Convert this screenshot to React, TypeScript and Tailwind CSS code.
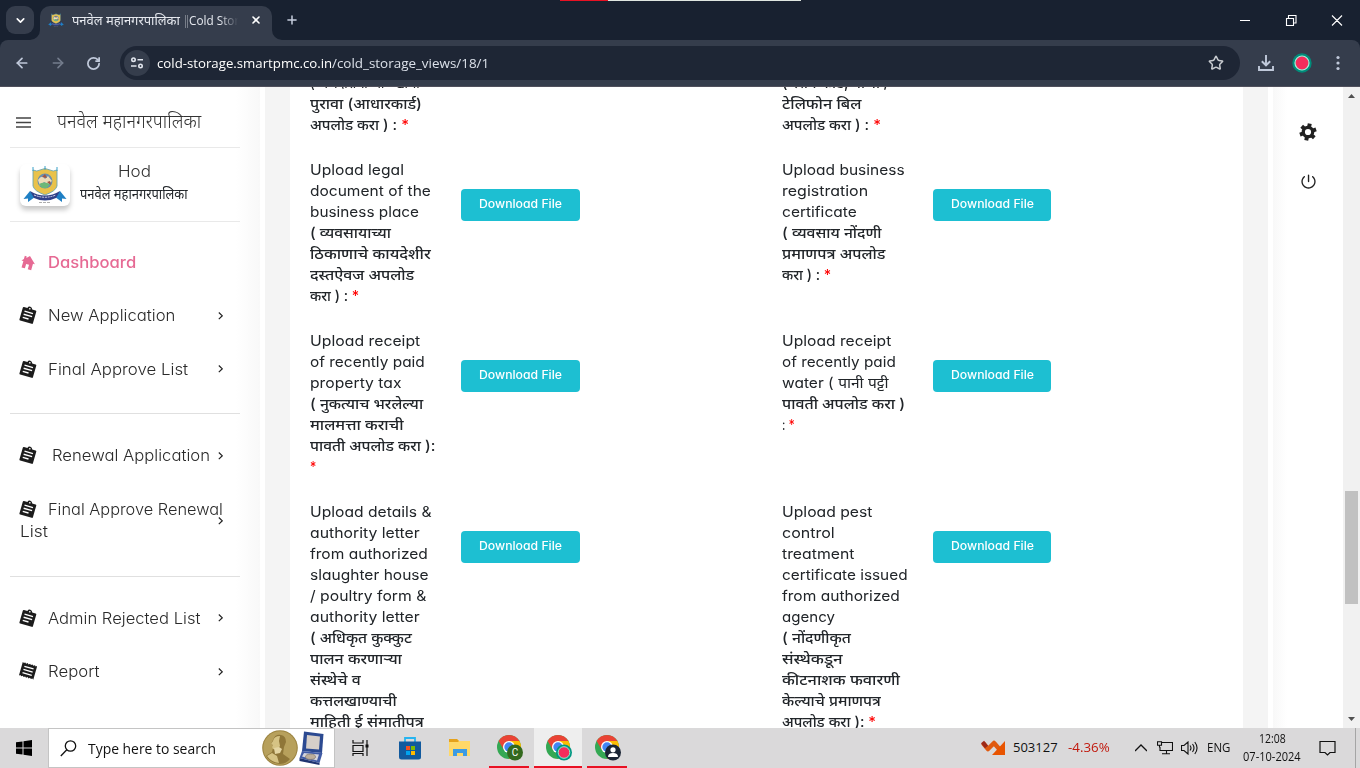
import React, { useLayoutEffect, useRef, useState } from "react";
import { IoIosPower } from "react-icons/io";
import { ArrowLeft, ArrowRight, RotateCw, Star, ChevronDown, X, Plus } from "lucide-react";

/** Text set on one line and stretched horizontally to a given width. */
function Fit({ w, className = "", children }: { w: number; className?: string; children: React.ReactNode }) {
  const ref = useRef<HTMLSpanElement>(null);
  const [scale, setScale] = useState(1);
  useLayoutEffect(() => {
    const measure = () => {
      if (ref.current) setScale(w / ref.current.offsetWidth);
    };
    measure();
    document.fonts?.ready.then(measure);
  }, [w]);
  return (
    <span className={"block shrink-0 whitespace-nowrap text-left " + className} style={{ width: w }}>
      <span ref={ref} className="inline-block origin-left" style={{ transform: `scaleX(${scale})` }}>
        {children}
      </span>
    </span>
  );
}

const round = "font-['Inter','Noto_Sans',sans-serif] [font-feature-settings:'cv11']";

type L = [string, number, boolean?];

const isMarathi = (t: string) => /^[^a-zA-Z]*[\u0900-\u097f]/.test(t);

function Field({ lines }: { lines: L[] }) {
  return (
    <div className={"flex w-[151px] shrink-0 flex-col text-[14.5px] leading-[21px] text-[#212529] " + round}>
      {lines.map(([t, w, req], i) => (
        <Fit key={i} w={w} className={isMarathi(t) ? "h-[21px] font-medium" : "h-[21px]"}>
          {t}
          {req && <span className="text-[#ff0000]">{t ? " *" : "*"}</span>}
        </Fit>
      ))}
    </div>
  );
}

function DownloadButton({ w }: { w: string }) {
  return (
    <button className={"mt-[30px] flex h-8 shrink-0 rounded-[4px] bg-[#1dbfd2] pl-[18px] pt-[6px] text-[11.5px] font-medium leading-[18px] text-white " + w + " " + round}>
      <Fit w={83}>Download File</Fit>
    </button>
  );
}

function Row({ left, right, button = true, className = "min-h-[147px]" }: { left: L[]; right: L[]; button?: boolean; className?: string }) {
  return (
    <div className={"mb-6 flex items-start pl-5 " + className}>
      <div className="flex w-[472px] shrink-0 items-start">
        <Field lines={left} />
        {button && <DownloadButton w="w-[119px]" />}
      </div>
      <div className="flex items-start">
        <Field lines={right} />
        {button && <DownloadButton w="w-[118px]" />}
      </div>
    </div>
  );
}

function Crest({ className }: { className: string }) {
  return (
    <svg viewBox="0 0 44 38" className={className}>
      <path d="M10 4 Q14 6 17 4 L22 2.500 27 4 Q30 6 34 4 V20 Q33 25 22 29 Q11 25 10 20Z" fill="#e9c24a" stroke="#6ba5b0" strokeWidth=".9" />
      <path d="M10 1v4M22 0v4M34 1v4" stroke="#3aa0c8" strokeWidth="1" />
      <circle cx="22" cy="15" r="7.500" fill="#6a8fae" />
      <path d="M15 14q4-6 7-1l3-3 4 5-4 3-4-2-4 4z" fill="#eedcb8" />
      <path d="M16 18q5-3 11 0l-3 4h-5z" fill="#6db878" />
      <path d="M19 11l3-3 2 4zM24 16l3-1 1 4z" fill="#a5533f" />
      <path d="M7 25 L.5 33 5 32.500 5 36 12 31ZM37 25l6.500 8-4.500-.5 0 3.500-7-5Z" fill="#1f7fc4" />
      <path d="M7 25q15 9 30 0l-4 7q-11 5-22 0z" fill="#2f4088" />
      <path d="M11 29q11 4.500 22 0" fill="none" stroke="#d8d8ee" strokeWidth="1" strokeDasharray="2 .8" />
      <path d="M16 36.500h12" stroke="#999" strokeWidth=".8" strokeDasharray="3 1" />
    </svg>
  );
}

function Clipboard() {
  return (
    <svg viewBox="0 0 18 18" className="size-[18px] shrink-0">
      <g transform="rotate(16 9 9)">
        <path d="M3 2.500H6.500Q7 .4 9 .4T11.500 2.500H15Q16 2.500 16 3.500V15.500Q16 16.500 15 16.500H3Q2 16.500 2 15.500V3.500Q2 2.500 3 2.500Z" fill="#1c1c1c" />
        <circle cx="9" cy="2.500" r=".8" fill="#fff" />
        <path d="M4.600 6.300h8.800M4.600 9.500h8.800M4.600 12.700h6" stroke="#fff" strokeWidth="1.400" />
      </g>
    </svg>
  );
}

function Receipt() {
  return (
    <svg viewBox="0 0 18 18" className="size-[18px] shrink-0">
      <g transform="rotate(16 9 9)">
        <path d="M1.500 1.500l1.250 1 1.250-1 1.250 1 1.250-1 1.250 1 1.250-1 1.250 1 1.250-1 1.250 1 1.250-1 1.250 1 1.250-1V16l-1.250-1-1.250 1-1.250-1-1.250 1-1.250-1-1.250 1-1.250-1-1.250 1-1.250-1-1.250 1-1.250-1-1.250 1z" fill="#1c1c1c" />
        <path d="M4.200 5.500h9.600M4.200 8.800h9.600M4.200 12.100h9.600" stroke="#fff" strokeWidth="1.300" />
      </g>
    </svg>
  );
}

function Caret({ className }: { className: string }) {
  return (
    <svg viewBox="0 0 5 8" className={"h-2 w-[5px] " + className} fill="none" stroke="#222" strokeWidth="1.200">
      <path d="M.8.500L4.300 3.800 .8 7.100" />
    </svg>
  );
}

function MenuItem({ label, w, pad = "ml-[11px]", report = false, caret = true, className = "h-[54px]" }: { label: string; w: number; pad?: string; report?: boolean; caret?: boolean; className?: string }) {
  return (
    <div className={"flex items-center text-[#2a2a2a] " + className}>
      <div className="-mt-0.5 ml-[19px]">{report ? <Receipt /> : <Clipboard />}</div>
      <Fit w={w} className={pad + " text-[15.5px] font-light leading-[22px] " + round}>{label}</Fit>
      {caret && <Caret className="-mt-px ml-auto mr-[37px]" />}
    </div>
  );
}

function Chrome({ badge }: { badge: "c" | "rec" | "user" }) {
  return (
    <svg viewBox="0 0 28 28" className="size-7 shrink-0">
      <circle cx="13" cy="13" r="12" fill="#34a853" />
      <path d="M2.6 7A12 12 0 0 1 23.4 7H13L8 16Z" fill="#ea4335" />
      <path d="M23.4 7A12 12 0 0 1 13 25L18.2 16 18 10 13 7Z" fill="#fbbc04" />
      <circle cx="13" cy="13" r="6" fill="#fff" />
      <circle cx="13" cy="13" r="4.7" fill="#4285f4" />
      {badge === "c" && (
        <>
          <circle cx="19" cy="18.5" r="8" fill="#33691e" />
          <text x="19" y="22" textAnchor="middle" fontSize="10" fill="#fff" fontFamily="Roboto">C</text>
        </>
      )}
      {badge === "rec" && (
        <>
          <circle cx="19" cy="18.5" r="8" fill="#009681" />
          <circle cx="19" cy="18.5" r="5.8" fill="#f52c5c" stroke="#8cf0d0" strokeWidth="1" />
        </>
      )}
      {badge === "user" && (
        <>
          <circle cx="19" cy="18.5" r="8" fill="#1a2434" />
          <circle cx="19" cy="15.8" r="2.6" fill="#fff" />
          <path d="M14 23q0-4 5-4t5 4z" fill="#fff" />
        </>
      )}
    </svg>
  );
}

function Browser() {
  return (
    <header className="h-[87px] shrink-0 bg-[#182130] font-['Open_Sans','Noto_Sans',sans-serif]">
      <div className="relative flex h-10">
        <div className="absolute left-[560px] top-0 flex h-px">
          <div className="w-12 bg-[#e81123]" />
          <div className="w-[193px] bg-[#dfe6e0]" />
        </div>
        <div className="ml-1.5 mt-1.5 flex size-7 items-center justify-center rounded-[9px] bg-[#353d4c]">
          <ChevronDown className="size-[13px] text-white" strokeWidth={3} />
        </div>
        <div className="relative ml-1.5 mt-1.5 flex h-[34px] w-[232px] items-center rounded-t-[10px] bg-[#353d4c] pb-1.5">
          <svg viewBox="0 0 10 10" className="absolute -left-2.5 bottom-0 size-2.5"><path d="M10 0V10H0A10 10 0 0 0 10 0" fill="#353d4c" /></svg>
          <svg viewBox="0 0 10 10" className="absolute -right-2.5 bottom-0 size-2.5"><path d="M0 0V10H10A10 10 0 0 1 0 0" fill="#353d4c" /></svg>
          <Crest className="ml-2 size-4" />
          <div className="ml-2 flex w-[168px] gap-1 pt-px text-[12px] leading-5 text-[#e6e9ef] [mask-image:linear-gradient(90deg,#000_88%,transparent_99%)]">
            <Fit w={108}>पनवेल महानगरपालिका</Fit>
            <div className="flex">
              <Fit w={5}>||</Fit>
              <Fit w={50}>Cold Stor</Fit>
            </div>
          </div>
          <X className="ml-[10px] size-3 text-white" strokeWidth={3.2} />
        </div>
        <Plus className="ml-[13px] mt-[13px] size-[14px] text-[#c5cddd]" strokeWidth={2.6} />
        <svg viewBox="0 0 110 20" className="ml-auto mr-3 mt-[10px] h-5 w-[110px]" fill="none" stroke="#fff" strokeWidth="1.1">
          <path d="M2 10.5h10M48.500 8.500h7v7h-7zM50.500 8.500v-3h7.500v7.500h-2.500M94 5.500l10 10M104 5.500l-10 10" />
        </svg>
      </div>
      <div className="flex h-[47px] items-center rounded-t-lg border-b border-[#50505c] bg-[#353d4c]">
        <ArrowLeft className="ml-[14px] size-4 text-[#c0c9da]" strokeWidth={2.6} />
        <ArrowRight className="ml-5 size-4 text-[#747d8d]" strokeWidth={2.4} />
        <RotateCw className="ml-5 size-[15px] text-[#c0c9da]" strokeWidth={2.8} />
        <div className="ml-[19px] flex h-[34px] w-[1120px] items-center rounded-full bg-[#1e2635]">
          <div className="ml-1 flex size-[26px] items-center justify-center rounded-full bg-[#353d4c]">
            <svg viewBox="0 0 14 12" className="h-3 w-3.5" fill="none" stroke="#e2e6ee" strokeWidth="1.6">
              <circle cx="3.500" cy="2.700" r="1.700" /><path d="M7.500 2.700H13M1 9H6.500" /><circle cx="10.500" cy="9" r="1.700" />
            </svg>
          </div>
          <div className="ml-[7px] flex pt-px text-[13px] text-white">
            <Fit w={175}>cold-storage.smartpmc.co.in</Fit>
            <Fit w={157} className="text-[#dbe0e9]">/cold_storage_views/18/1</Fit>
          </div>
          <Star className="ml-auto mr-4 size-4 text-[#c8cbd0]" strokeWidth={2.3} />
        </div>
        <svg viewBox="0 0 16 16" className="ml-[18px] size-4" fill="none" stroke="#c0c9da" strokeWidth="1.9">
          <path d="M8 0v10M3.800 6.200L8 10.300l4.200-4.100M1 11v4h14v-4" />
        </svg>
        <svg viewBox="0 0 20 20" className="ml-[18px] size-5"><circle cx="10" cy="10" r="9.700" fill="#008c7a" /><circle cx="10" cy="10" r="7" fill="#f52c5c" stroke="#a5f0da" strokeWidth="1.200" /></svg>
        <svg viewBox="0 0 4 16" className="ml-6 h-4 w-1" fill="#c0c9da"><circle cx="2" cy="2.500" r="1.600" /><circle cx="2" cy="8" r="1.600" /><circle cx="2" cy="13.500" r="1.600" /></svg>
      </div>
    </header>
  );
}

function Sidebar() {
  return (
    <aside className="w-[260px] shrink-0 bg-[linear-gradient(90deg,#fff_236px,#f8f8f8_260px)]">
      <div className="w-[240px] pl-2.5">
        <div className="flex h-[61px] items-center border-b border-[#e9e9e9] pl-1.5 pt-[9px]">
          <svg viewBox="0 0 15 11" className="mt-px h-[11px] w-[15px]" stroke="#444" strokeWidth="1.300"><path d="M0 1h15M0 5.500h15M0 10h15" /></svg>
          <Fit w={144} className="-mt-0.5 ml-[26px] font-['Noto_Sans',sans-serif] text-[19px] font-light leading-6 text-[#333]">पनवेल महानगरपालिका</Fit>
        </div>
        <div className="flex h-[74px] items-start border-b border-[#e9e9e9] pl-2.5">
          <div className="mt-[16px] flex h-[42px] w-[50px] items-center justify-center rounded-md bg-white shadow-[0_4px_5px_rgba(0,0,0,0.22)]">
            <Crest className="h-[38px] w-11" />
          </div>
          <div className="ml-2.5 mt-[13px] flex w-[108px] flex-col items-center">
            <Fit w={33} className={"text-[15.5px] font-light leading-[22px] text-[#333] " + round}>Hod</Fit>
            <Fit w={108} className="font-['Noto_Sans',sans-serif] text-[14px] leading-[22px] text-[#212529]">पनवेल महानगरपालिका</Fit>
          </div>
        </div>
      </div>
      <div className="mt-[14px] flex h-[53px] items-center text-[#e66a94]">
        <svg viewBox="0 0 18 18" className="ml-[19px] size-[18px]" fill="currentColor">
          <path transform="rotate(16 9 9)" d="M9 1.800L16 8.300H14V15H10.500V10.500H7.500V15H4V8.300H2L4 6.400V3H6V4.600Z" />
        </svg>
        <Fit w={88} className={"ml-[11px] text-[15.5px] font-medium leading-[22px] " + round}>Dashboard</Fit>
      </div>
      <MenuItem label="New Application" w={127} />
      <MenuItem label="Final Approve List" w={140} className="h-[53px]" />
      <div className="ml-2.5 mt-[17px] h-px w-[230px] bg-[#e0e0e0]" />
      <MenuItem label="Renewal Application" w={158} pad="ml-[15px]" className="mt-[15px] h-[54px]" />
      <div className="relative h-[76px]">
        <MenuItem label="Final Approve Renewal" w={175} caret={false} />
        <Fit w={28} className={"-mt-4 ml-5 text-[15.5px] font-light leading-[22px] text-[#2a2a2a] " + round}>List</Fit>
        <Caret className="absolute left-[218px] top-[34px]" />
      </div>
      <div className="ml-2.5 mt-[17px] h-px w-[230px] bg-[#e0e0e0]" />
      <MenuItem label="Admin Rejected List" w={152} className="mt-[15px] h-[53px]" />
      <MenuItem label="Report" w={52} report />
    </aside>
  );
}

function Taskbar() {
  return (
    <footer className="flex h-10 shrink-0 bg-[#dad9da] font-['Open_Sans','Noto_Sans',sans-serif] text-[#111]">
      <div className="flex w-12 items-center justify-center">
        <svg viewBox="0 0 16 16" className="size-4"><path d="M0 2.300L6.500 1.400V7.500H0zM7.500 1.200L16 0V7.500H7.500zM0 8.500H6.500V14.600L0 13.700zM7.500 8.500H16V16L7.500 14.800z" /></svg>
      </div>
      <div className="flex w-[287px] items-center border border-[#c4c4c4] bg-white">
        <svg viewBox="0 0 17 17" className="ml-[11px] size-[17px]" fill="none" stroke="#111" strokeWidth="1.300"><circle cx="10.500" cy="6" r="5.200" /><path d="M6.800 9.700L.8 16" /></svg>
        <Fit w={128} className="ml-[11px] text-[15px]">Type here to search</Fit>
        <svg viewBox="0 0 66 38" className="ml-auto mr-[6px] h-[38px] w-[66px]">
          <circle cx="18" cy="19" r="17.800" fill="#9c8440" />
          <circle cx="18" cy="19" r="16.700" fill="#b7a05c" />
          <path d="M11 11Q13 5 19 6q5 1 5 7l-2 5-1 7 7 5q-4 5-10 5Q8 34 4 27l6-4 1-4-1-1 1-2-2-1z" fill="#8f7638" />
          <path d="M11 12q1-5 7-5l-1 5 1 5-3 4-4-1-1-2 1-2-2-1zM10 24l5 3 2 7Q9 33 5 27z" fill="#d6c384" />
          <path d="M12 19l5-1 3 2-2 4-5 1z" fill="#e4d5a2" />
          <path d="M42 2.500L61.500 5 60 24 40 22z" fill="#2c4a91" /><path d="M45 6l13 1.500-1 13-13-1z" fill="#d6cfc9" />
          <path d="M40 22l20.500 2-3 10-20-5z" fill="#405ba5" /><path d="M42 24l15 1.500-2 6-15-4z" fill="#d4d4dc" />
          <ellipse cx="48.500" cy="27.800" rx="5" ry="2.600" fill="#bcae9c" stroke="#807668" strokeWidth=".7" />
          <path d="M37.500 29l20 5v2l-20-4z" fill="#1e3370" />
        </svg>
      </div>
      <div className="flex w-[49px] items-center justify-center">
        <svg viewBox="0 0 17 16" className="ml-px h-4 w-[17px]" fill="none" stroke="#111" strokeWidth="1.200"><path d="M1 0v3h10V0M1 5.500h10v6H1zM1 16v-2.500h10V16M15 0v16" /><path d="M13.500 6h3" strokeWidth="3" /></svg>
      </div>
      <div className="flex w-[52px] items-center justify-center">
        <svg viewBox="0 0 24 24" className="size-6"><path d="M7 6V2h10v4" fill="none" stroke="#25b4f0" strokeWidth="1.800" /><path d="M1 5.500h22V21q0 2.500-2.500 2.500h-17Q1 23.500 1 21z" fill="#115a9e" /><path d="M8 10h4v4H8z" fill="#f25022" /><path d="M13 10h4v4h-4z" fill="#7fba00" /><path d="M8 15h4v4H8z" fill="#00a4ef" /><path d="M13 15h4v4h-4z" fill="#ffb900" /></svg>
      </div>
      <div className="flex w-[47px] items-center justify-center">
        <svg viewBox="0 0 22 20" className="h-5 w-[22px]"><path d="M0 1h8l2 2h11v15H0z" fill="#ffd868" /><path d="M0 1h8l2 2-1 1H0z" fill="#e5a21c" /><path d="M4 18v-7h14v7h-4v-3H8v3z" fill="#3c9be4" /></svg>
      </div>
      <div className="ml-[6px] flex w-10 items-center justify-center border-b-2 border-[#e81123] pl-0.5 pt-0.5"><Chrome badge="c" /></div>
      <div className="ml-[5px] flex w-12 items-center justify-center border-b-2 border-[#e81123] bg-[#eeeeee] pl-0.5 pt-0.5"><Chrome badge="rec" /></div>
      <div className="ml-[5px] flex w-10 items-center justify-center border-b-2 border-[#e81123] pl-0.5 pt-0.5"><Chrome badge="user" /></div>
      <div className="ml-auto flex items-center text-[13px]">
        <svg viewBox="0 0 24 16" className="h-4 w-6" fill="none"><path d="M2 3l5 6 6-6 7 8" stroke="#e05a10" strokeWidth="4.500" strokeLinejoin="round" /><path d="M1.500 2l4 5" stroke="#9c2919" strokeWidth="4" /><path d="M24 1v14H11z" fill="#e85400" /></svg>
        <Fit w={45} className="ml-2">503127</Fit>
        <Fit w={42} className="ml-[10px] text-[#c1190d]">-4.36%</Fit>
        <svg viewBox="0 0 12 8" className="ml-[25px] h-2 w-3" fill="none" stroke="#111" strokeWidth="1.300"><path d="M0 7l6-6 6 6" /></svg>
        <svg viewBox="0 0 16 14" className="ml-[10px] h-3.5 w-4" fill="none" stroke="#111" strokeWidth="1.100"><path d="M5 1.500h10.500v8H3V6M9.500 9.500v3M5 12.700h8M.5.800h4v3.500h-4zM2.500 4v2.500" /></svg>
        <svg viewBox="0 0 17 14" className="ml-2 h-3.5 w-[17px]" fill="none" stroke="#111" strokeWidth="1.100"><path d="M.5 4.500h2.500l4-3.500v12l-4-3.500H.5zM9 4.500q2 2.500 0 5M11.500 3q3 4 0 8M13.800 1q4.500 6 0 12" /></svg>
        <Fit w={23} className="ml-[9px] text-[12px]">ENG</Fit>
        <div className="ml-[13px] flex w-[58px] flex-col items-center text-[12px] leading-[18px]">
          <Fit w={27}>12:08</Fit>
          <Fit w={58}>07-10-2024</Fit>
        </div>
        <svg viewBox="0 0 17 17" className="ml-[18px] size-[17px]" fill="none" stroke="#111" strokeWidth="1.200"><path d="M1 1.500h15v11h-5l-2.500 2.500L6 12.500H1z" /></svg>
        <div className="ml-[19px] mr-1 h-10 w-px bg-[#a5a5a5]" />
      </div>
    </footer>
  );
}

export default function App() {
  return (
    <div className="flex h-[768px] w-[1360px] flex-col overflow-hidden bg-white">
      <Browser />
      <main className="flex h-[641px] shrink-0 overflow-hidden">
        <Sidebar />
        <section className="ml-[5px] w-[1003px] shrink-0 overflow-hidden border-x-[25px] border-[#f4f4f4] bg-white">
          <div className="-mt-[15px]">
            <Row
              button={false}
              className="h-[63px]"
              left={[["( अर्जदाराचा ओळखीचा", 110], ["पुरावा (आधारकार्ड)", 112], ["अपलोड करा ) :", 99, true]]}
              right={[["( रेशन कार्ड, पाणी /", 107], ["टेलिफोन बिल", 79], ["अपलोड करा ) :", 99, true]]}
            />
            <Row
              left={[["Upload legal", 94], ["document of the", 121], ["business place", 109], ["( व्यवसायाच्या", 81], ["ठिकाणाचे कायदेशीर", 121], ["दस्तऐवज अपलोड", 104], ["करा ) :", 49, true]]}
              right={[["Upload business", 123], ["registration", 86], ["certificate", 75], ["( व्यवसाय नोंदणी", 99], ["प्रमाणपत्र अपलोड", 103], ["करा ) :", 49, true]]}
            />
            <Row
              left={[["Upload receipt", 110], ["of recently paid", 115], ["property tax", 91], ["( नुकत्याच भरलेल्या", 113], ["मालमत्ता कराची", 94], ["पावती अपलोड करा ):", 126], ["", 6, true]]}
              right={[["Upload receipt", 109], ["of recently paid", 114], ["water ( पानी पट्टी", 106], ["पावती अपलोड करा )", 123], [":", 13, true]]}
            />
            <Row
              left={[["Upload details &", 122], ["authority letter", 110], ["from authorized", 118], ["slaughter house", 119], ["/ poultry form &", 116], ["authority letter", 110], ["( अधिकृत कुक्कुट", 102], ["पालन करणाऱ्या", 92], ["संस्थेचे व", 51], ["कत्तलखाण्याची", 87], ["माहिती ई संमातीपत्र", 114]]}
              right={[["Upload pest", 90], ["control", 53], ["treatment", 73], ["certificate issued", 126], ["from authorized", 118], ["agency", 53], ["( नोंदणीकृत", 69], ["संस्थेकडून", 61], ["कीटनाशक फवारणी", 118], ["केल्याचे प्रमाणपत्र", 99], ["अपलोड करा ):", 94, true]]}
            />
          </div>
        </section>
        <aside className="ml-[5px] flex w-[70px] shrink-0 flex-col items-center bg-[linear-gradient(90deg,#f8f8f8,#fff_14px)] pt-[36px] text-[#212121]">
          <svg viewBox="0 0 18 18" className="size-[18px]" fill="none" stroke="currentColor">
            <circle cx="9" cy="9" r="4.700" strokeWidth="3.200" />
            <g transform="rotate(12 9 9)" strokeWidth="4"><path d="M9 .5v3M9 14.500v3M1.640 4.750l2.600 1.500M13.760 11.750l2.600 1.500M1.640 13.250l2.600-1.500M13.760 6.250l2.600-1.500" /></g>
          </svg>
          <IoIosPower className="mt-[31px] size-[19px]" />
        </aside>
        <div className="flex w-[17px] shrink-0 flex-col items-center bg-[#f1f1f1]">
          <svg viewBox="0 0 7 4" className="mt-[7px] h-1 w-[7px]" fill="#505050"><path d="M0 4h7L3.500 0z" /></svg>
          <div className="mt-[393px] h-[113px] w-[13px] bg-[#c1c1c1]" />
          <svg viewBox="0 0 7 4" className="mt-auto mb-[7px] h-1 w-[7px]" fill="#505050"><path d="M0 0h7L3.500 4z" /></svg>
        </div>
      </main>
      <Taskbar />
    </div>
  );
}
